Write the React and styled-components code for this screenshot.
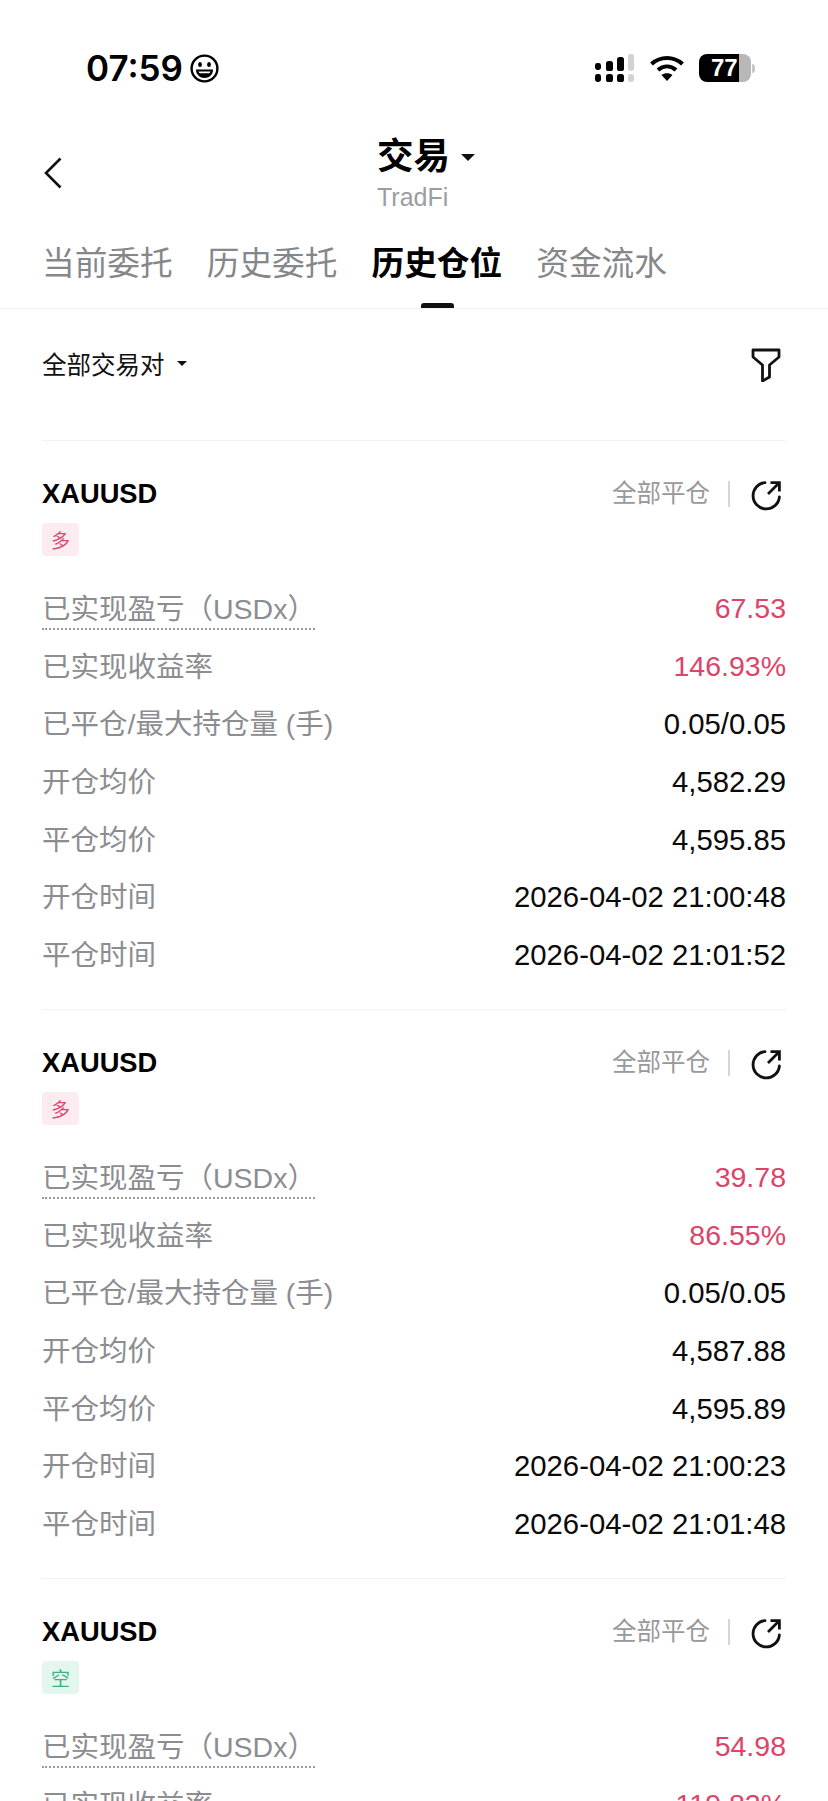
import React from "react";
import styled, { createGlobalStyle } from "styled-components";

const positions = [
  {
    side: "long",
    pnl: "67.53",
    rate: "146.93%",
    open: "4,582.29",
    close: "4,595.85",
    openTime: "2026-04-02 21:00:48",
    closeTime: "2026-04-02 21:01:52",
  },
  {
    side: "long",
    pnl: "39.78",
    rate: "86.55%",
    open: "4,587.88",
    close: "4,595.89",
    openTime: "2026-04-02 21:00:23",
    closeTime: "2026-04-02 21:01:48",
  },
  {
    side: "short",
    pnl: "54.98",
    rate: "119.82%",
  },
];

const tabs = ["当前委托", "历史委托", "历史仓位", "资金流水"];

const detailRows = (p) =>
  [
    ["已平仓/最大持仓量 (手)", p.open && "0.05/0.05"],
    ["开仓均价", p.open],
    ["平仓均价", p.close],
    ["开仓时间", p.openTime],
    ["平仓时间", p.closeTime],
  ].filter((row) => row[1]);

const App = () => {
  return (
    <Page>
      <GlobalStyle />
      <StatusBar>
        <Clock>
          07:59
          <GrinIcon />
        </Clock>
        <StatusIcons>
          <SignalIcon />
          <WifiIcon />
          <Battery>
            <BatteryBody>77</BatteryBody>
            <BatteryCap />
          </Battery>
        </StatusIcons>
      </StatusBar>
      <NavBar>
        <BackButton>
          <BackIcon />
        </BackButton>
        <TitleBlock>
          <Title>
            交易
            <Caret $size={7} />
          </Title>
          <Subtitle>TradFi</Subtitle>
        </TitleBlock>
      </NavBar>
      <Tabs>
        {tabs.map((tab, i) => (
          <Tab key={tab} $active={i === 2}>
            {tab}
          </Tab>
        ))}
      </Tabs>
      <FilterRow>
        <PairSelect>
          全部交易对
          <Caret $size={5} />
        </PairSelect>
        <FilterIcon />
      </FilterRow>
      <List>
        {positions.map((p, i) => (
          <Card key={i}>
            <CardHeader>
              <Symbol>XAUUSD</Symbol>
              <CardActions>
                <CloseAll>全部平仓</CloseAll>
                <ShareIcon />
              </CardActions>
            </CardHeader>
            <SideTag $side={p.side}>{p.side === "long" ? "多" : "空"}</SideTag>
            <Rows>
              <Row>
                <DottedLabel>已实现盈亏（USDx）</DottedLabel>
                <Value $red>{p.pnl}</Value>
              </Row>
              <Row>
                <Label>已实现收益率</Label>
                <Value $red>{p.rate}</Value>
              </Row>
              {detailRows(p).map(([label, value]) => (
                <Row key={label}>
                  <Label>{label}</Label>
                  <Value>{value}</Value>
                </Row>
              ))}
            </Rows>
          </Card>
        ))}
      </List>
    </Page>
  );
};

export default App;

const GrinIcon = () => (
  <svg width="29" height="29" viewBox="0 0 29 29" fill="none">
    <circle cx="14.5" cy="14.5" r="12.9" stroke="#000" strokeWidth="2.4" />
    <ellipse cx="10" cy="10.5" rx="1.9" ry="2.6" fill="#000" />
    <ellipse cx="19" cy="10.5" rx="1.9" ry="2.6" fill="#000" />
    <path d="M6 15.5H23C23 21 19 24 14.5 24C10 24 6 21 6 15.5Z" fill="#000" />
    <path d="M8.5 17.5H20.5C20 18.6 19.6 19 19 19.3H10C9.4 19 9 18.6 8.5 17.5Z" fill="#fff" />
  </svg>
);

const SignalIcon = () => (
  <svg width="40" height="28" viewBox="0 0 40 28">
    <rect x="0" y="9" width="6" height="7" rx="2.4" fill="#000" />
    <rect x="11" y="7" width="7" height="10" rx="2.6" fill="#000" />
    <rect x="22" y="3" width="7" height="14" rx="2.6" fill="#000" />
    <rect x="33" y="0" width="6" height="17" rx="2.4" fill="#d2d2d2" />
    <rect x="0" y="20" width="6" height="8" rx="2.4" fill="#000" />
    <rect x="11" y="20" width="7" height="8" rx="2.6" fill="#000" />
    <rect x="22" y="20" width="7" height="8" rx="2.6" fill="#000" />
    <rect x="33" y="20" width="6" height="8" rx="2.4" fill="#d2d2d2" />
  </svg>
);

const WifiIcon = () => (
  <svg width="34" height="26" viewBox="0 0 34 26" fill="none">
    <path d="M1.5 9C10.5 1 23.5 1 32.5 9" stroke="#000" strokeWidth="4.2" />
    <path d="M8 15C13.5 10.3 20.5 10.3 26 15" stroke="#000" strokeWidth="4.2" />
    <path d="M17 26L11.5 20C14.5 17.5 19.5 17.5 22.5 20Z" fill="#000" />
  </svg>
);

const BackIcon = () => (
  <svg width="18" height="32" viewBox="0 0 18 32" fill="none">
    <path d="M16.5 1.5L2 16L16.5 30.5" stroke="#111" strokeWidth="2.6" />
  </svg>
);

const FilterIcon = () => (
  <FilterSvg width="30" height="34" viewBox="0 0 30 34" fill="none">
    <path
      d="M2 2H28V9L18.5 17V29L11.5 33V17L2 9Z"
      stroke="#111"
      strokeWidth="2.8"
      strokeLinejoin="round"
    />
  </FilterSvg>
);

const ShareIcon = () => (
  <ShareSvg width="30" height="30" viewBox="0 0 30 30" fill="none">
    <path
      d="M14 1.6A13.2 13.2 0 1 0 28.4 16"
      stroke="#111"
      strokeWidth="2.8"
      strokeLinecap="round"
    />
    <path d="M17 13L27.5 2.5M19.5 1.6H28.4V10.5" stroke="#111" strokeWidth="2.8" />
  </ShareSvg>
);

const GlobalStyle = createGlobalStyle`
  html, body {
    margin: 0;
    padding: 0;
    background: #fff;
  }
  body {
    font-family: "Liberation Sans", "Noto Sans CJK SC", sans-serif;
    overflow: hidden;
  }
`;

const Page = styled.div`
  width: 828px;
  height: 1801px;
  overflow: hidden;
  background: #fff;
`;

const StatusBar = styled.div`
  height: 100px;
  padding: 36px 73px 0 86px;
  box-sizing: border-box;
  display: flex;
  align-items: center;
  justify-content: space-between;
`;

const Clock = styled.div`
  display: flex;
  align-items: center;
  gap: 7px;
  font-family: "Inter", "Liberation Sans", sans-serif;
  font-size: 35px;
  font-weight: 600;
  color: #000;
`;

const StatusIcons = styled.div`
  display: flex;
  align-items: center;
  gap: 15px;
`;

const Battery = styled.div`
  display: flex;
  align-items: center;
  gap: 1px;
`;

const BatteryBody = styled.div`
  width: 52px;
  height: 28px;
  border-radius: 8px;
  background: linear-gradient(to right, #000 77%, #b8b8b8 77%);
  color: #fff;
  font-size: 24px;
  font-weight: 700;
  line-height: 28px;
  padding-left: 12px;
  box-sizing: border-box;
`;

const BatteryCap = styled.div`
  width: 3px;
  height: 9px;
  border-radius: 0 3px 3px 0;
  background: #c8c8c8;
`;

const NavBar = styled.div`
  height: 135px;
  display: grid;
  grid-template-columns: 1fr auto 1fr;
  box-sizing: border-box;
  padding: 35px 0 0 24px;
`;

const BackButton = styled.div`
  grid-column: 1;
  padding: 22px 0 0 20px;
  color: #111;
`;

const TitleBlock = styled.div`
  grid-column: 2;
  display: flex;
  flex-direction: column;
  align-items: flex-start;
`;

const Title = styled.div`
  display: flex;
  align-items: center;
  gap: 11px;
  font-size: 36.5px;
  font-weight: 700;
  line-height: 44px;
  color: #000;
`;

const Subtitle = styled.div`
  font-size: 25px;
  line-height: 30px;
  margin-top: 3px;
  color: #9b9da0;
`;

const Caret = styled.span`
  width: 0;
  height: 0;
  border-left: ${(p) => p.$size}px solid transparent;
  border-right: ${(p) => p.$size}px solid transparent;
  border-top: ${(p) => p.$size * 1.1}px solid #111;
`;

const Tabs = styled.div`
  height: 73px;
  padding: 0 42px;
  display: flex;
  gap: 34px;
  border-bottom: 1px solid #f1f1f2;
`;

const Tab = styled.div`
  position: relative;
  font-size: 32.7px;
  line-height: 44px;
  padding-top: 7px;
  font-weight: ${(p) => (p.$active ? 700 : 400)};
  color: ${(p) => (p.$active ? "#000" : "#85878b")};

  &::after {
    content: "";
    display: ${(p) => (p.$active ? "block" : "none")};
    position: absolute;
    left: 50%;
    bottom: 0;
    width: 33px;
    height: 5px;
    margin-left: -16px;
    border-radius: 3px 3px 0 0;
    background: #111;
  }
`;

const FilterRow = styled.div`
  height: 108px;
  padding: 0 47px 0 42px;
  display: flex;
  align-items: center;
  justify-content: space-between;
`;

const FilterSvg = styled.svg`
  margin-top: 4px;
`;

const PairSelect = styled.div`
  display: flex;
  align-items: center;
  gap: 12px;
  font-size: 24.5px;
  color: #111;
`;

const List = styled.div`
  padding: 0 42px;
  margin-top: 23px;
`;

const Card = styled.div`
  height: 569px;
  border-top: 1px solid #f2f2f3;
  padding-top: 37px;
  box-sizing: border-box;
`;

const CardHeader = styled.div`
  display: flex;
  align-items: center;
  justify-content: space-between;
  height: 32px;
`;

const Symbol = styled.div`
  font-size: 27.3px;
  font-weight: 700;
  color: #000;
`;

const CardActions = styled.div`
  display: flex;
  align-items: center;
  padding-right: 5px;
`;

const CloseAll = styled.div`
  font-size: 24.5px;
  line-height: 26px;
  padding-right: 18px;
  margin-right: 21px;
  color: #98999c;
  border-right: 2px solid #d6d6d6;
`;

const ShareSvg = styled.svg`
  margin-top: 4px;
`;

const SideTag = styled.div`
  width: 37px;
  height: 33px;
  margin-top: 13px;
  border-radius: 4px;
  display: flex;
  align-items: center;
  justify-content: center;
  font-size: 19px;
  color: ${(p) => (p.$side === "long" ? "#d9476d" : "#3eb184")};
  background: ${(p) => (p.$side === "long" ? "#fcecf0" : "#e4f7ef")};
`;

const Rows = styled.div`
  margin-top: 24px;
`;

const Row = styled.div`
  height: 57.7px;
  display: flex;
  align-items: center;
  justify-content: space-between;
`;

const Label = styled.span`
  font-size: 28.5px;
  line-height: 36px;
  color: #8b8d91;
`;

const DottedLabel = styled(Label)`
  width: 273px;
  white-space: nowrap;
  margin-top: 3px;
  padding-bottom: 1px;
  border-bottom: 2px dotted #9a9a9a;
`;

const Value = styled.span`
  font-size: ${(p) => (p.$red ? "28.5px" : "29.3px")};
  color: ${(p) => (p.$red ? "#dc4469" : "#0a0a0a")};
`;
